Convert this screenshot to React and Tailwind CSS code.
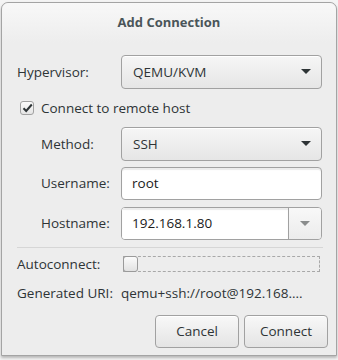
import React from 'react';

const font = { fontFamily: '"Open Sans", "DejaVu Sans", sans-serif' };

const Arrow = ({ color = '#2e3436' }) => (
  <svg width="10" height="6" viewBox="0 0 10 6">
    <path d="M0 0 L10 0 L5 5 Z" fill={color} />
  </svg>
);

const Combo = ({ value }) => (
  <div className="w-[201px] h-[34px] flex items-center justify-between pl-[11px] pr-[10px] border border-[#a1a1a1] rounded-[4px] bg-gradient-to-b from-[#f6f6f6] to-[#e6e6e6] shadow-[inset_0_1px_0_#ffffff] text-[#2e3436]">
    <span>{value}</span>
    <Arrow />
  </div>
);

const App = () => {
  return (
    <div className="w-[338px] h-[360px] bg-[#f4f4f4] pt-[2px] pl-[1px]" style={font}>
      <div className="w-[336px] h-[354px] border border-[#a4a4a4] rounded-t-[7px] bg-[#ededed] shadow-[0_2px_3px_rgba(0,0,0,0.25)] flex flex-col">
        <div className="h-[40px] flex items-center justify-center rounded-t-[7px] bg-gradient-to-b from-[#f8f8f8] to-[#ededed]">
          <span className="text-[13px] font-bold text-[#4a5559]">Add Connection</span>
        </div>

        <div className="pl-[15px] pt-[12px] flex flex-col text-[13.5px] text-[#2e3436]">
          <div className="flex items-center">
            <span className="w-[104px]">Hypervisor:</span>
            <Combo value="QEMU/KVM" />
          </div>

          <div className="flex items-center mt-[12px] h-[14px] pl-[3px]">
            <div className="w-[14px] h-[14px] border border-[#a1a1a1] rounded-[3px] bg-gradient-to-b from-[#fbfbfb] to-[#e4e4e4] flex items-center justify-center">
              <svg width="11" height="10" viewBox="0 0 11 10">
                <path d="M1.5 5.2 L4.2 8 L9.8 1.5" stroke="#2e3436" strokeWidth="2" fill="none" />
              </svg>
            </div>
            <span className="ml-[7px]">Connect to remote host</span>
          </div>

          <div className="flex items-center mt-[12px]">
            <span className="w-[104px] pl-[24px]">Method:</span>
            <Combo value="SSH" />
          </div>

          <div className="flex items-center mt-[6px]">
            <span className="w-[104px] pl-[24px]">Username:</span>
            <div className="w-[201px] h-[33px] flex items-center pl-[10px] border border-[#a1a1a1] rounded-[4px] bg-white shadow-[inset_0_2px_1px_#ececec] text-[#1a1a1a]">
              root
            </div>
          </div>

          <div className="flex items-center mt-[7px]">
            <span className="w-[104px] pl-[24px]">Hostname:</span>
            <div className="w-[201px] h-[33px] flex border border-[#a1a1a1] rounded-[4px] overflow-hidden">
              <div className="flex-1 flex items-center pl-[10px] bg-white shadow-[inset_0_2px_1px_#ececec] text-[#1a1a1a]">
                192.168.1.80
              </div>
              <div className="w-[33px] flex items-center justify-center border-l border-[#a1a1a1] bg-gradient-to-b from-[#f8f8f8] to-[#ececec]">
                <Arrow color="#8a8c8c" />
              </div>
            </div>
          </div>

          <div className="mt-[7px] w-[306px] h-[1px] bg-[#d6d6d6]" />

          <div className="flex items-center mt-[8px] h-[16px]">
            <span className="w-[106px]">Autoconnect:</span>
            <div className="w-[197px] h-[16px] border border-dashed border-[#a8a8a8] relative">
              <div className="absolute -left-[1px] -top-[1px] w-[15px] h-[16px] border border-[#9a9a9a] rounded-[3px] bg-gradient-to-b from-[#fbfbfb] to-[#e2e2e2]" />
            </div>
          </div>

          <div className="flex items-center mt-[13px] h-[16px]">
            <span className="w-[104px]">Generated URI:</span>
            <span>qemu+ssh://root@192.168....</span>
          </div>

          <div className="flex justify-end gap-[5px] mt-[14px] pr-[8px]">
            <button className="w-[84px] h-[33px] border border-[#a1a1a1] rounded-[4px] bg-gradient-to-b from-[#f8f8f8] to-[#e4e4e4] shadow-[inset_0_1px_0_#ffffff] text-[#2e3436]">
              Cancel
            </button>
            <button className="w-[84px] h-[33px] border border-[#a1a1a1] rounded-[4px] bg-gradient-to-b from-[#f8f8f8] to-[#e4e4e4] shadow-[inset_0_1px_0_#ffffff] text-[#2e3436]">
              Connect
            </button>
          </div>
        </div>
      </div>
    </div>
  );
};

export default App;
